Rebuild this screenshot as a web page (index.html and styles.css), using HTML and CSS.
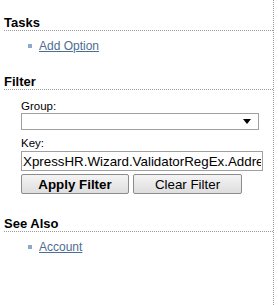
FILE: index.html
```html
<html>
  <head>
    <meta name="viewport" content="width=device-width,initial-scale=1">
    <title>Options</title>
    <link rel="stylesheet" href="styles.css">
  </head>
  <body>
    <div class="sidebar">
        <div class="section">
            <h3>Tasks</h3>
            <ul class="links">
                <li><a href="#">Add Option</a></li>
            </ul>
        </div>

        <div class="section">
            <h3>Filter</h3>
            <div class="filter">
                <label for="group">Group:</label>
                <div class="select-wrap">
                    <select id="group"><option></option></select>
                </div>
                <label for="key">Key:</label>
                <input id="key" type="text" value="XpressHR.Wizard.ValidatorRegEx.Address">
                <div class="buttons">
                    <button class="primary">Apply Filter</button>
                    <button>Clear Filter</button>
                </div>
            </div>
        </div>

        <div class="section">
            <h3>See Also</h3>
            <ul class="links">
                <li><a href="#">Account</a></li>
            </ul>
        </div>
    </div>
  </body>
</html>
```

FILE: styles.css
```css
:root {
    --rule: #9a9a9a;
    --link: #4e6d92;
    --bullet: #8eaacb;
}

html, body {
    margin: 0;
    padding: 0;
}

body {
    font-family: "Liberation Sans", Arial, sans-serif;
    color: #000;
    background: #fff;
}

.sidebar {
    margin-left: 4px;
    width: 270px;
    min-height: 305px;
    padding-top: 15px;
    box-sizing: border-box;
    border-right: 1px dotted var(--rule);
}

.section + .section {
    margin-top: 20px;
}

.section h3 {
    margin: 0;
    font-size: 13px;
    line-height: 15px;
    font-weight: bold;
    border-bottom: 1px dotted var(--rule);
}

.links {
    list-style: none;
    margin: 8px 0 0;
    padding: 0;
}

.links li {
    padding-left: 24px;
    font-size: 12px;
    line-height: 15px;
}

.links li::before {
    content: "";
    display: inline-block;
    width: 4px;
    height: 4px;
    margin-right: 7px;
    vertical-align: 2px;
    background: var(--bullet);
}

.links a {
    color: var(--link);
}

/* Filter form */
.filter {
    padding: 10px 0 0 17px;
}

.filter label {
    display: block;
    font-size: 11.5px;
    line-height: 13px;
}

.select-wrap {
    position: relative;
    width: 238px;
    margin-bottom: 7px;
}

.select-wrap select {
    display: block;
    width: 100%;
    height: 17px;
    margin: 0;
    padding: 0 2px;
    border: 1px solid #a0a0a0;
    background: #fff;
    font: 13.333px "Liberation Sans", Arial, sans-serif;
    -webkit-appearance: none;
    appearance: none;
    border-radius: 0;
}

.select-wrap::after {
    content: "";
    position: absolute;
    right: 8px;
    top: 6px;
    border-left: 4px solid transparent;
    border-right: 4px solid transparent;
    border-top: 5px solid #000;
    pointer-events: none;
}

.filter input {
    display: block;
    box-sizing: border-box;
    width: 242px;
    height: 20px;
    margin: 1px 0 0;
    padding: 0 1px;
    border: 1px solid #a0a0a0;
    font: 13.333px "Liberation Sans", Arial, sans-serif;
    color: #000;
}

.buttons {
    display: flex;
    gap: 4px;
    margin-top: 3px;
}

.buttons button {
    box-sizing: border-box;
    width: 108px;
    height: 20px;
    margin: 0;
    padding: 0;
    border: 1px solid #8c8c8c;
    border-radius: 2px;
    background: linear-gradient(#f4f4f4, #dedede);
    font: 13.333px "Liberation Sans", Arial, sans-serif;
    color: #000;
}

.buttons button + button {
    width: 109px;
}

.buttons .primary {
    font-weight: bold;
}

.section:last-child {
    margin-top: 22px;
}
```
